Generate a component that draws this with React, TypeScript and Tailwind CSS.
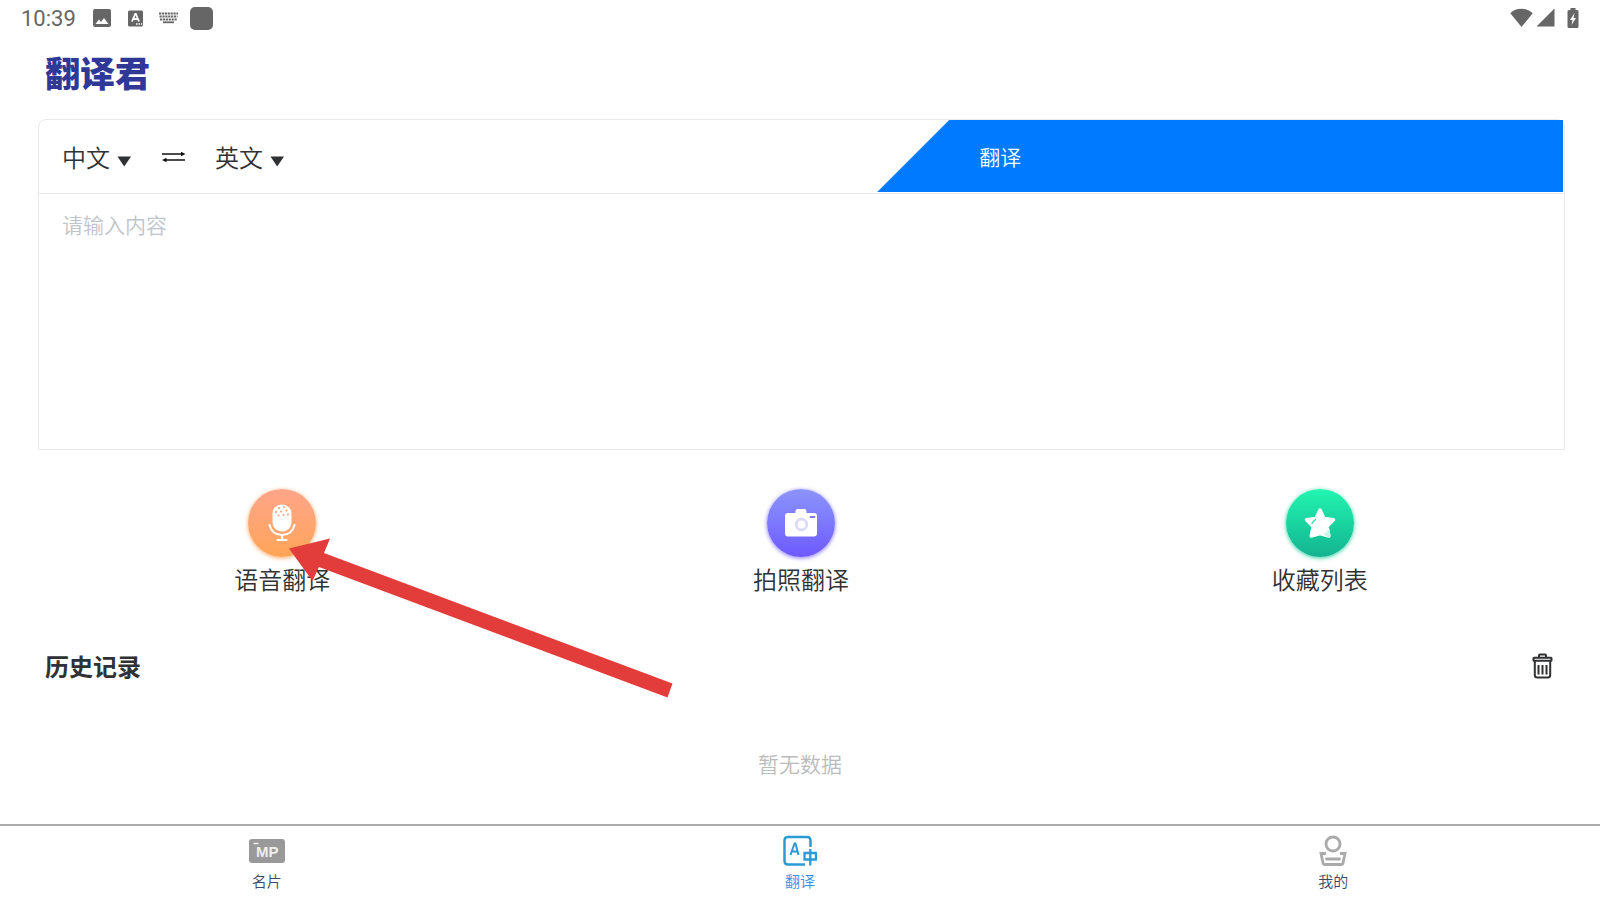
import { useState } from "react";

function StatusBar() {
  return (
    <div className="flex h-9 items-center justify-between px-[21px] text-[#666666]">
      <div className="flex items-center">
        <span className="w-[72px] pt-px font-[Roboto] text-[22px] leading-9 font-normal">10:39</span>
        <svg width="18" height="18" viewBox="0 0 18 18" fill="currentColor">
          <path d="M2 0h14a2 2 0 0 1 2 2v14a2 2 0 0 1-2 2H2a2 2 0 0 1-2-2V2a2 2 0 0 1 2-2zM2.500 15h13l-4.500-6-3 4-2-2.500z" fillRule="evenodd" />
        </svg>
        <svg className="ml-4" width="17" height="17" viewBox="0 0 17 17">
          <rect x="1" y="0.500" width="15" height="16" rx="1.500" fill="currentColor" />
          <path d="M5 11.500 8.200 4h0.600L12 11.500M6.200 9h4.600" fill="none" stroke="#fff" strokeWidth="1.800" />
          <path d="M9 14h1.500M11.500 14H13M14 14h1.200" stroke="#fff" strokeWidth="1.300" />
        </svg>
        <svg className="ml-[15px]" width="19" height="12" viewBox="0 0 19 12" fill="none" stroke="currentColor" strokeWidth="1.800">
          <path d="M0 1.500h19M0.500 4.500h18M1 7.500h17" strokeDasharray="2.200 0.700" />
          <path d="M4 10.300h11" />
        </svg>
        <span className="ml-3 h-[23px] w-[23px] rounded-[5px] bg-[#666666]" />
      </div>
      <div className="flex items-center pb-px">
        <svg width="23" height="20" viewBox="0 0 23 20" fill="currentColor">
          <path d="M11.500 19 0.300 5.200C3.300 2.300 7 0.800 11.500 0.800s8.200 1.500 11.200 4.400z" />
        </svg>
        <svg className="ml-[3px]" width="19" height="19" viewBox="0 0 19 19" fill="currentColor">
          <path d="M18.500 0.500v18H0.500z" />
        </svg>
        <svg className="ml-3" width="12" height="20" viewBox="0 0 12 20">
          <path d="M3.500 0h5v2H10a1.500 1.500 0 0 1 1.500 1.500v15A1.500 1.500 0 0 1 10 20H2a1.500 1.500 0 0 1-1.500-1.500v-15A1.500 1.500 0 0 1 2 2h1.500z" fill="currentColor" />
          <path d="M7.500 5 3 12h2.500l-1 5L9 10H6.500z" fill="#fff" />
        </svg>
      </div>
    </div>
  );
}

function LangSelect({ label, value, onChange }: { label: string; value: string; onChange: (v: string) => void }) {
  return (
    <div className="relative w-[70px]">
      <select
        aria-label={label}
        value={value}
        onChange={(e) => onChange(e.target.value)}
        className="block w-full cursor-pointer appearance-none bg-transparent text-2xl text-[#303133] outline-none"
      >
        <option>中文</option>
        <option>英文</option>
      </select>
      <svg className="pointer-events-none absolute right-px bottom-1.5" width="14" height="11" viewBox="0 0 14 11">
        <path d="M0.500 0.500h13.500L7.200 10.500z" fill="#303133" />
      </svg>
    </div>
  );
}

function TranslateCard() {
  const [from, setFrom] = useState("中文");
  const [to, setTo] = useState("英文");

  const swap = () => {
    setFrom(to);
    setTo(from);
  };

  return (
    <section className="mr-[35px] ml-[38px] rounded-t-lg border border-[#e9eaec]">
      <div className="flex h-[74px] items-start justify-between border-b border-[#e9eaec] pr-px">
        <div className="flex h-full items-center pl-[23px]">
          <LangSelect label="源语言" value={from} onChange={setFrom} />
          <button aria-label="交换" onClick={swap} className="mx-[29px] cursor-pointer">
            <svg width="25" height="14" viewBox="0 0 25 14" fill="none" stroke="#111" strokeWidth="1.500">
              <path d="M1 4h20M5 10h19" />
              <path d="M20 1.800 24.500 4 20 6.200zM5.500 7.800 1 10l4.500 2.200z" fill="#111" stroke="none" />
            </svg>
          </button>
          <LangSelect label="目标语言" value={to} onChange={setTo} />
        </div>
        <button className="h-[72px] w-[45%] cursor-pointer bg-[#007aff] pt-0.5 pl-[102px] text-left text-[21px] text-white [clip-path:polygon(72px_0,100%_0,100%_100%,0_100%)]">
          翻译
        </button>
      </div>
      <textarea
        aria-label="内容"
        placeholder="请输入内容"
        className="block h-[255px] w-full resize-none px-[23px] py-3.5 text-[21px] leading-8 text-[#303133] outline-none placeholder:text-[#c0c4cc]"
      />
    </section>
  );
}

function MicIcon() {
  return (
    <svg width="28" height="38" viewBox="0 0 28 38">
      <rect x="4.500" y="0.500" width="19" height="27" rx="9" fill="#fff" />
      <g fill="#ffa277">
        <circle cx="11" cy="4" r="1" />
        <circle cx="16" cy="3" r="1" />
        <circle cx="8" cy="8" r="1" />
        <circle cx="13" cy="7.500" r="1" />
        <circle cx="18.500" cy="6.500" r="1" />
        <circle cx="10.500" cy="11.500" r="1" />
        <circle cx="15.500" cy="11" r="1" />
        <circle cx="20" cy="10.500" r="1" />
      </g>
      <path d="M1.500 21c1.500 6.500 6.500 10 12.500 10s11-3.500 12.500-10" fill="none" stroke="#fff" strokeWidth="2.200" strokeLinecap="round" />
      <path d="M14 31v5M9.500 36h9" fill="none" stroke="#fff" strokeWidth="2.200" strokeLinecap="round" />
    </svg>
  );
}

function CameraIcon() {
  return (
    <svg width="32" height="28" viewBox="0 0 32 28">
      <path d="M10.500 4V2a2 2 0 0 1 2-2h7a2 2 0 0 1 2 2v2H29a3 3 0 0 1 3 3v17.500a3 3 0 0 1-3 3H3a3 3 0 0 1-3-3V7a3 3 0 0 1 3-3z" fill="#fff" />
      <circle cx="16.500" cy="15.500" r="5.300" fill="none" stroke="#dcd9ff" strokeWidth="2.800" />
      <path d="M25.500 8h4" stroke="#8078f8" strokeWidth="1.800" strokeLinecap="round" />
    </svg>
  );
}

function StarIcon() {
  return (
    <svg width="32" height="32" viewBox="0 0 32 32">
      <path
        d="M16 3 20 11.500 29.500 12.800 22.800 19.500 24.800 29 16 26.500 7.200 29 9.200 19.500 2.500 12.800 12 11.500z"
        fill="#fff"
        stroke="#fff"
        strokeWidth="3.500"
        strokeLinejoin="round"
      />
      <path d="M25.500 21.500 19.500 28l5.300 2q1.800-0.300 1.700-2z" fill="#c9f7ea" />
      <path d="M8 16.500q1-2 3.500-4" fill="none" stroke="#35dba8" strokeWidth="1.300" strokeLinecap="round" />
    </svg>
  );
}

function Shortcuts() {
  return (
    <section className="mt-[39px] mr-[21px] ml-[23px] grid grid-cols-3 text-2xl text-[#303133]">
      <button className="flex cursor-pointer flex-col items-center">
        <span className="flex h-[68px] w-[68px] items-center justify-center rounded-full bg-linear-to-b from-[#ffa589] to-[#ffa556] shadow-[0_1px_4px_#ffa966]">
          <MicIcon />
        </span>
        <span className="mt-0.5 leading-10">语音翻译</span>
      </button>
      <button className="flex cursor-pointer flex-col items-center">
        <span className="flex h-[68px] w-[68px] items-center justify-center rounded-full bg-linear-to-b from-[#8c93fa] to-[#6f58ff] shadow-[0_1px_4px_#8575ff]">
          <CameraIcon />
        </span>
        <span className="mt-0.5 leading-10">拍照翻译</span>
      </button>
      <button className="flex cursor-pointer flex-col items-center">
        <span className="flex h-[68px] w-[68px] items-center justify-center rounded-full bg-linear-to-b from-[#22f5b0] to-[#13b490] shadow-[0_1px_4px_#2cd0a2]">
          <StarIcon />
        </span>
        <span className="mt-0.5 leading-10">收藏列表</span>
      </button>
    </section>
  );
}

function History() {
  return (
    <section className="mt-[47px] flex-1">
      <div className="flex h-10 items-center justify-between pr-[47px] pl-[45px]">
        <h2 className="text-2xl font-bold text-[#303133]">历史记录</h2>
        <button aria-label="清空" className="cursor-pointer">
          <svg width="21" height="26" viewBox="0 0 21 26" fill="none" stroke="#303133" strokeWidth="2">
            <path d="M7 4.500V2.500q0-1 1-1h5q1 0 1 1v2" />
            <rect x="1.500" y="4.800" width="18" height="3" rx="0.500" />
            <path d="M2.800 8v14q0 2.500 2.500 2.500h10.400q2.500 0 2.500-2.500V8" />
            <path d="M6.500 12v9.500M10.500 12v9.500M14.500 12v9.500" />
          </svg>
        </button>
      </div>
      <p className="mt-[61px] text-center text-[21px] leading-8 text-[#bbbbbb]">暂无数据</p>
    </section>
  );
}

function TabBar() {
  return (
    <nav className="grid h-[76px] grid-cols-3 border-t-2 border-[#aaaaaa] text-[15px] text-[#3c4a66]">
      <a href="#card" className="flex flex-col items-center pt-2">
        <svg width="36" height="34" viewBox="0 0 36 34">
          <rect y="5" width="36" height="24" rx="3" fill="#999" />
          <path d="M4.500 9.500h5" stroke="#eee" strokeWidth="1.500" />
          <text x="7" y="23" fontFamily="Liberation Sans" fontWeight="700" fontSize="15" fill="#eee">
            MP
          </text>
        </svg>
        <span className="pt-px leading-6">名片</span>
      </a>
      <a href="#translate" className="flex flex-col items-center pt-2 text-[#3a8ee6]">
        <svg width="34" height="34" viewBox="0 0 34 34" fill="none" stroke="#2b9bd6" strokeWidth="2.500">
          <path d="M22 30.500H5q-3.500 0-3.500-3.500V6.500Q1.500 3 5 3h19q3.500 0 3.500 3.500V13" />
          <path d="M7.500 21 11.500 9.500h1L15.500 21M9 17.500h6" strokeWidth="2" />
          <path d="M21.500 19h11.500v6.500H21.500zM27.300 15v16.500" strokeWidth="2.300" />
        </svg>
        <span className="pt-px leading-6">翻译</span>
      </a>
      <a href="#mine" className="flex flex-col items-center pt-2">
        <svg width="28" height="34" viewBox="0 0 28 34" fill="none" stroke="#aaa" strokeWidth="2.800">
          <circle cx="14" cy="10" r="7" />
          <path d="M7 19.500H2l2 9.500q0.300 1.500 2 1.500h16q1.700 0 2-1.500l2-9.500h-5" />
          <path d="M7.500 25h13" strokeLinecap="round" />
        </svg>
        <span className="pt-px leading-6">我的</span>
      </a>
    </nav>
  );
}

export default function App() {
  return (
    <div className="relative flex min-h-screen flex-col bg-white font-['Noto_Sans_CJK_SC',sans-serif] font-[350]">
      <StatusBar />
      <h1 className="mt-4 mb-[27px] pl-[45px] text-[35px] leading-10 font-black text-[#2f3896]">翻译君</h1>
      <TranslateCard />
      <Shortcuts />
      <History />
      <TabBar />

      {/* Pointer arrow to the voice button */}
      <svg className="pointer-events-none absolute top-[538px] left-[288px]" width="386" height="162" viewBox="0 0 386 162">
        <path d="M1 10.500 42 0.500 36 15 384.500 145.500 379.500 159.500 31 29 24.500 43z" fill="#e23d3b" />
      </svg>
    </div>
  );
}
